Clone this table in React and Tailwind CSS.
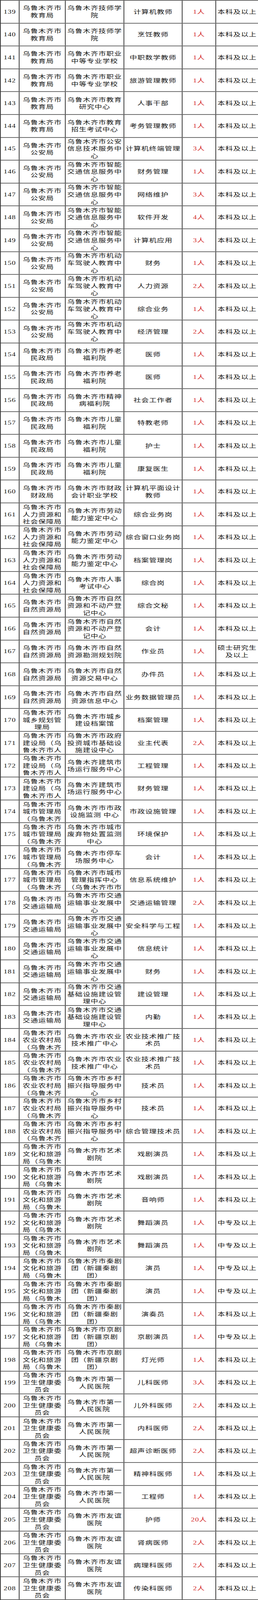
const rows = [
  [139, '乌鲁木齐市教育局', '乌鲁木齐技师学院', '计算机教师', '1人', '本科及以上'],
  [140, '乌鲁木齐市教育局', '乌鲁木齐技师学院', '烹饪教师', '1人', '本科及以上'],
  [141, '乌鲁木齐市教育局', '乌鲁木齐市职业中等专业学校', '中职数学教师', '1人', '本科及以上'],
  [142, '乌鲁木齐市教育局', '乌鲁木齐市职业中等专业学校', '旅游管理教师', '1人', '本科及以上'],
  [143, '乌鲁木齐市教育局', '乌鲁木齐市教育研究中心', '人事干部', '1人', '本科及以上'],
  [144, '乌鲁木齐市教育局', '乌鲁木齐市教育招生考试中心', '考务管理教师', '1人', '本科及以上'],
  [145, '乌鲁木齐市公安局', '乌鲁木齐市公安信息技术服务中心', '计算机终端管理', '3人', '本科及以上'],
  [146, '乌鲁木齐市公安局', '乌鲁木齐市智能交通信息服务中心', '财务管理', '1人', '本科及以上'],
  [147, '乌鲁木齐市公安局', '乌鲁木齐市智能交通信息服务中心', '网络维护', '3人', '本科及以上'],
  [148, '乌鲁木齐市公安局', '乌鲁木齐市智能交通信息服务中心', '软件开发', '4人', '本科及以上'],
  [149, '乌鲁木齐市公安局', '乌鲁木齐市智能交通信息服务中心', '计算机应用', '3人', '本科及以上'],
  [150, '乌鲁木齐市公安局', '乌鲁木齐市机动车驾驶人教育中心', '财务', '1人', '本科及以上'],
  [151, '乌鲁木齐市公安局', '乌鲁木齐市机动车驾驶人教育中心', '人力资源', '2人', '本科及以上'],
  [152, '乌鲁木齐市公安局', '乌鲁木齐市机动车驾驶人教育中心', '综合业务', '1人', '本科及以上'],
  [153, '乌鲁木齐市公安局', '乌鲁木齐市机动车驾驶人教育中心', '经济管理', '2人', '本科及以上'],
  [154, '乌鲁木齐市民政局', '乌鲁木齐市养老福利院', '医师', '1人', '本科及以上'],
  [155, '乌鲁木齐市民政局', '乌鲁木齐市养老福利院', '医师', '1人', '本科及以上'],
  [156, '乌鲁木齐市民政局', '乌鲁木齐市精神病福利院', '社会工作者', '1人', '本科及以上'],
  [157, '乌鲁木齐市民政局', '乌鲁木齐市儿童福利院', '特教老师', '1人', '本科及以上'],
  [158, '乌鲁木齐市民政局', '乌鲁木齐市儿童福利院', '护士', '1人', '本科及以上'],
  [159, '乌鲁木齐市民政局', '乌鲁木齐市儿童福利院', '康复医生', '1人', '本科及以上'],
  [160, '乌鲁木齐市财政局', '乌鲁木齐市财政会计职业学校', '计算机平面设计教师', '1人', '本科及以上'],
  [161, '乌鲁木齐市人力资源和社会保障局', '乌鲁木齐市劳动能力鉴定中心', '综合业务岗', '1人', '本科及以上'],
  [162, '乌鲁木齐市人力资源和社会保障局', '乌鲁木齐市劳动能力鉴定中心', '综合窗口业务岗', '1人', '本科及以上'],
  [163, '乌鲁木齐市人力资源和社会保障局', '乌鲁木齐市劳动能力鉴定中心', '档案管理岗', '1人', '本科及以上'],
  [164, '乌鲁木齐市人力资源和社会保障局', '乌鲁木齐市人事考试中心', '综合岗', '1人', '本科及以上'],
  [165, '乌鲁木齐市自然资源局', '乌鲁木齐市自然资源和不动产登记中心', '综合文秘', '1人', '本科及以上'],
  [166, '乌鲁木齐市自然资源局', '乌鲁木齐市自然资源和不动产登记中心', '会计', '1人', '本科及以上'],
  [167, '乌鲁木齐市自然资源局', '乌鲁木齐市自然资源勘测规划院', '作业员', '1人', '硕士研究生及以上'],
  [168, '乌鲁木齐市自然资源局', '乌鲁木齐市自然资源交易中心', '办件员', '1人', '本科及以上'],
  [169, '乌鲁木齐市自然资源局', '乌鲁木齐市自然资源信息中心', '业务数据管理员', '1人', '本科及以上'],
  [170, '乌鲁木齐市城乡规划管理局', '乌鲁木齐市城乡建设档案馆', '档案管理', '1人', '本科及以上'],
  [171, '乌鲁木齐市建设局（乌鲁木齐市人', '乌鲁木齐市政府投资城市基础设施建设中心', '业主代表', '2人', '本科及以上'],
  [172, '乌鲁木齐市建设局（乌鲁木齐市人', '乌鲁木齐建筑市场运行服务中心', '工程管理', '1人', '本科及以上'],
  [173, '乌鲁木齐市建设局（乌鲁木齐市人', '乌鲁木齐建筑市场运行服务中心', '财务管理', '1人', '本科及以上'],
  [174, '乌鲁木齐市城市管理局（乌鲁木齐', '乌鲁木齐市市政设施监测 中心', '市政设施管理', '1人', '本科及以上'],
  [175, '乌鲁木齐市城市管理局（乌鲁木齐', '乌鲁木齐市城市废弃物处置监测中心', '环境保护', '1人', '本科及以上'],
  [176, '乌鲁木齐市城市管理局（乌鲁木齐', '乌鲁木齐市停车场服务中心', '会计', '1人', '本科及以上'],
  [177, '乌鲁木齐市城市管理局（乌鲁木齐', '乌鲁木齐市城市管理指挥中心（乌鲁木齐市市', '信息系统维护', '1人', '本科及以上'],
  [178, '乌鲁木齐市交通运输局', '乌鲁木齐市交通运输事业发展中心', '交通运输管理', '2人', '本科及以上'],
  [179, '乌鲁木齐市交通运输局', '乌鲁木齐市交通运输事业发展中心', '安全科学与工程', '1人', '本科及以上'],
  [180, '乌鲁木齐市交通运输局', '乌鲁木齐市交通运输事业发展中心', '信息统计', '1人', '本科及以上'],
  [181, '乌鲁木齐市交通运输局', '乌鲁木齐市交通运输事业发展中心', '财务', '1人', '本科及以上'],
  [182, '乌鲁木齐市交通运输局', '乌鲁木齐市交通基础设施建设管理中心', '建设管理', '1人', '本科及以上'],
  [183, '乌鲁木齐市交通运输局', '乌鲁木齐市交通基础设施建设管理中心', '内勤', '1人', '本科及以上'],
  [184, '乌鲁木齐市农业农村局（乌鲁木齐', '乌鲁木齐市农业技术推广中心', '农业技术推广技术员', '1人', '本科及以上'],
  [185, '乌鲁木齐市农业农村局（乌鲁木齐', '乌鲁木齐市农业技术推广中心', '农业技术推广技术员', '1人', '本科及以上'],
  [186, '乌鲁木齐市农业农村局（乌鲁木齐', '乌鲁木齐市乡村振兴指导服务中心', '技术员', '1人', '本科及以上'],
  [187, '乌鲁木齐市农业农村局（乌鲁木齐', '乌鲁木齐市乡村振兴指导服务中心', '技术员', '1人', '本科及以上'],
  [188, '乌鲁木齐市农业农村局（乌鲁木齐', '乌鲁木齐市乡村振兴指导服务中心', '综合管理技术员', '1人', '本科及以上'],
  [189, '乌鲁木齐市文化和旅游局（乌鲁木', '乌鲁木齐市艺术剧院', '戏剧演员', '1人', '本科及以上'],
  [190, '乌鲁木齐市文化和旅游局（乌鲁木', '乌鲁木齐市艺术剧院', '戏剧演员', '1人', '本科及以上'],
  [191, '乌鲁木齐市文化和旅游局（乌鲁木', '乌鲁木齐市艺术剧院', '音响师', '1人', '本科及以上'],
  [192, '乌鲁木齐市文化和旅游局（乌鲁木', '乌鲁木齐市艺术剧院', '舞蹈演员', '1人', '中专及以上'],
  [193, '乌鲁木齐市文化和旅游局（乌鲁木', '乌鲁木齐市艺术剧院', '舞蹈演员', '1人', '中专及以上'],
  [194, '乌鲁木齐市文化和旅游局（乌鲁木', '乌鲁木齐市秦剧团（新疆秦剧团）', '演员', '1人', '中专及以上'],
  [195, '乌鲁木齐市文化和旅游局（乌鲁木', '乌鲁木齐市秦剧团（新疆秦剧团）', '演员', '1人', '中专及以上'],
  [196, '乌鲁木齐市文化和旅游局（乌鲁木', '乌鲁木齐市秦剧团（新疆秦剧团）', '演奏员', '1人', '本科及以上'],
  [197, '乌鲁木齐市文化和旅游局（乌鲁木', '乌鲁木齐市京剧团（新疆京剧团）', '京剧演员', '1人', '中专及以上'],
  [198, '乌鲁木齐市文化和旅游局（乌鲁木', '乌鲁木齐市京剧团（新疆京剧团）', '灯光师', '1人', '本科及以上'],
  [199, '乌鲁木齐市卫生健康委员会', '乌鲁木齐市第一人民医院', '儿科医师', '3人', '本科及以上'],
  [200, '乌鲁木齐市卫生健康委员会', '乌鲁木齐市第一人民医院', '儿外科医师', '2人', '本科及以上'],
  [201, '乌鲁木齐市卫生健康委员会', '乌鲁木齐市第一人民医院', '内科医师', '2人', '本科及以上'],
  [202, '乌鲁木齐市卫生健康委员会', '乌鲁木齐市第一人民医院', '超声诊断医师', '2人', '本科及以上'],
  [203, '乌鲁木齐市卫生健康委员会', '乌鲁木齐市第一人民医院', '精神科医师', '1人', '本科及以上'],
  [204, '乌鲁木齐市卫生健康委员会', '乌鲁木齐市第一人民医院', '工程师', '1人', '本科及以上'],
  [205, '乌鲁木齐市卫生健康委员会', '乌鲁木齐市友谊医院', '护师', '20人', '本科及以上'],
  [206, '乌鲁木齐市卫生健康委员会', '乌鲁木齐市友谊医院', '肾病医师', '2人', '本科及以上'],
  [207, '乌鲁木齐市卫生健康委员会', '乌鲁木齐市友谊医院', '病理科医师', '2人', '本科及以上'],
  [208, '乌鲁木齐市卫生健康委员会', '乌鲁木齐市友谊医院', '传染科医师', '2人', '本科及以上'],
]

const cell = 'flex items-center justify-center text-center overflow-hidden border-r-2 border-[#3a3a3a]'

export default function App() {
  return (
    <div className="w-[660px] h-[4096px] overflow-hidden bg-white">
      <div className="origin-top scale-y-[0.74419] border-l-2 border-t-2 border-[#3a3a3a] font-['Liberation_Serif','Noto_Sans_CJK_SC',serif] text-[19px] leading-[25px] tracking-[1px] text-[#141414]">
        {rows.map(([no, dept, unit, post, count, edu]) => (
          <div
            key={no}
            className="grid grid-cols-[48px_118px_150px_149px_86px_1fr] h-[calc(5502px/70)] overflow-hidden border-b-2 border-[#3a3a3a]"
          >
            <div className={cell}>{no}</div>
            <div className={cell}>{dept}</div>
            <div className={cell}>{unit}</div>
            <div className={cell}>{post}</div>
            <div className={`${cell} text-[#d21f1f]`}>{count}</div>
            <div className="flex items-center justify-center text-center overflow-hidden">{edu}</div>
          </div>
        ))}
      </div>
    </div>
  )
}
